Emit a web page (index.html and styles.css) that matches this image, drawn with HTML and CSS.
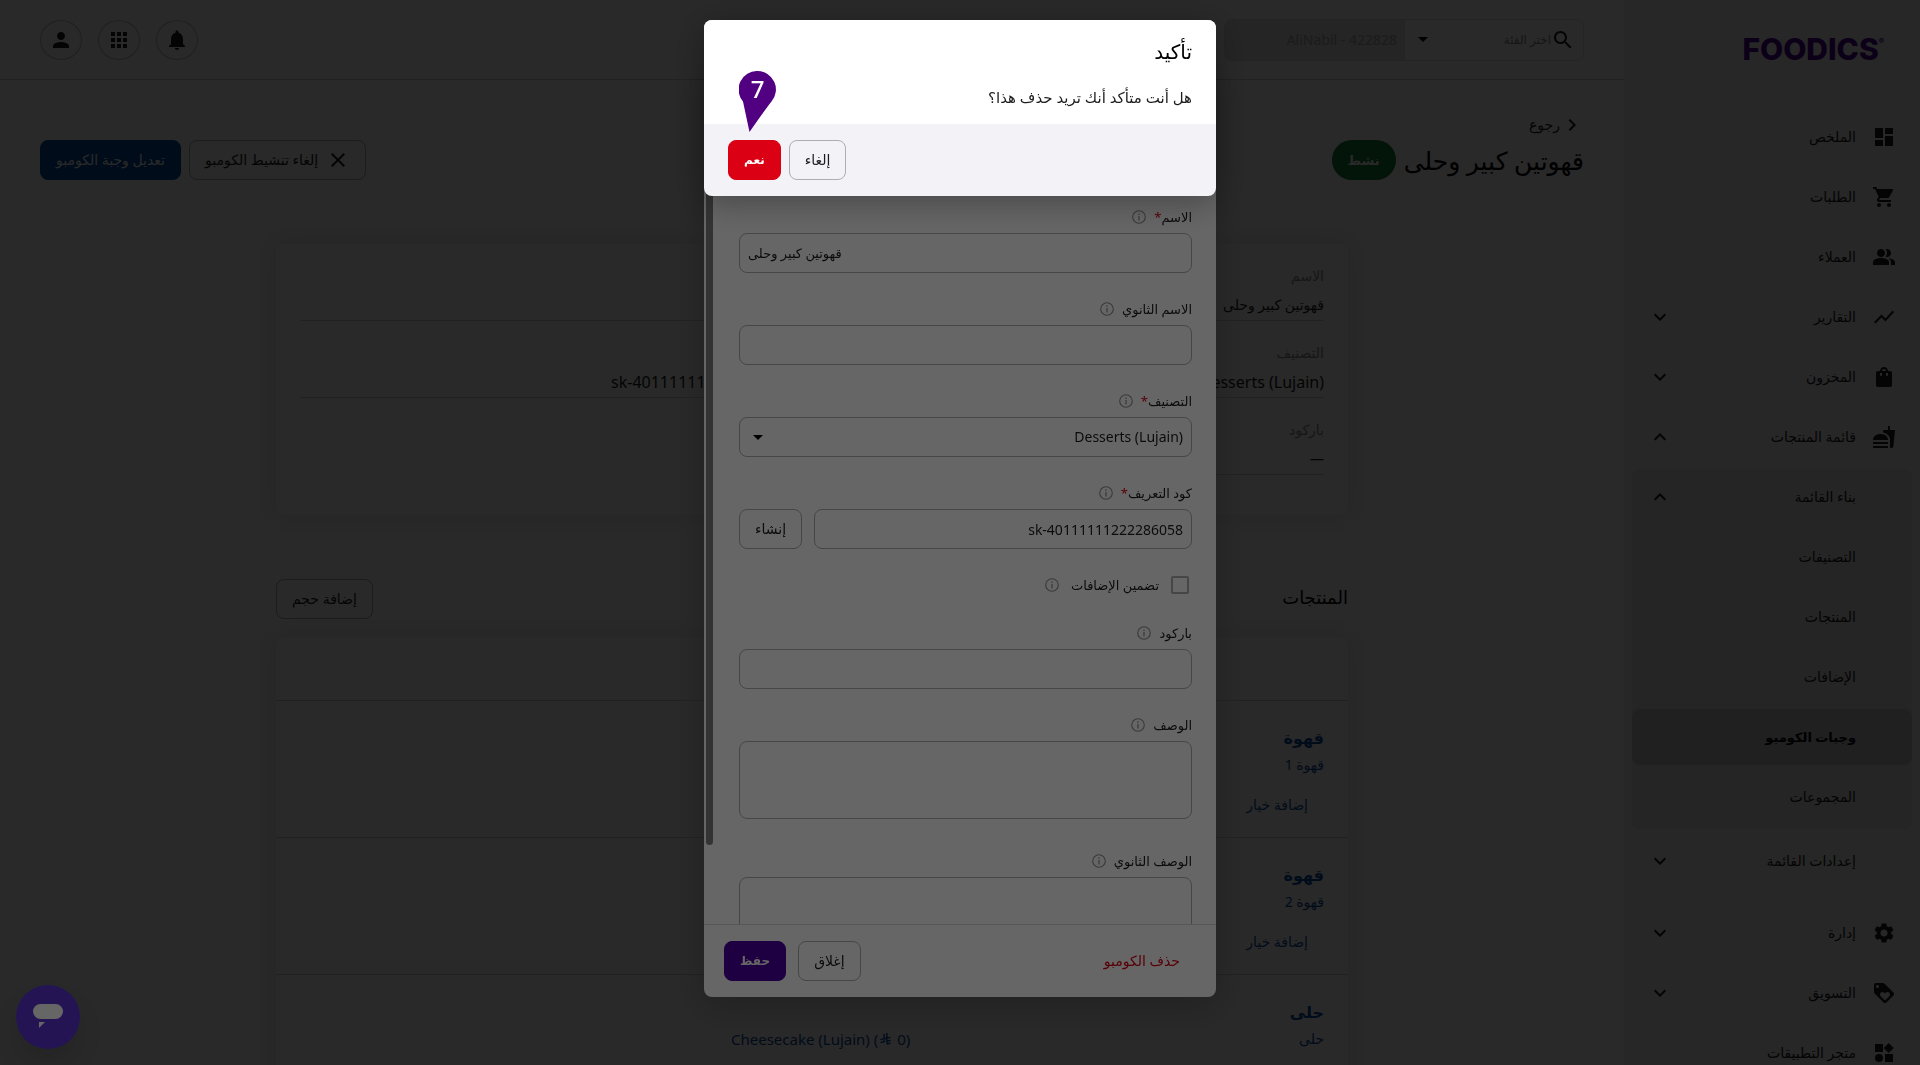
FILE: index.html
```
<!DOCTYPE html>
<html lang="ar" dir="rtl">

<head>
    <meta charset="utf-8">
    <meta name="viewport" content="width=device-width, initial-scale=1.0">
    <title>Foodics</title>
    <link rel="stylesheet" href="styles.css">
</head>

<body>

    <svg class="sprite" aria-hidden="true">
        <symbol id="down" viewBox="0 0 24 24"><path d="M7.4 8.6 12 13.2l4.6-4.6L18 10l-6 6-6-6z" /></symbol>
        <symbol id="up" viewBox="0 0 24 24"><path d="M7.4 15.4 12 10.8l4.6 4.6L18 14l-6-6-6 6z" /></symbol>
        <symbol id="info" viewBox="0 0 14 14">
            <circle cx="7" cy="7" r="6.3" fill="none" stroke="currentColor" stroke-width="1.1" />
            <path d="M6.4 6h1.2v4.4H6.4zM6.4 3.6h1.2v1.3H6.4z" />
        </symbol>
    </svg>

    <div class="app">
        <aside class="sidebar">
            <a href="#" class="logo" dir="ltr">FOODICS<sup>®</sup></a>
            <ul class="menu">
                <li><a href="#"><svg viewBox="0 0 24 24"><path d="M3 13h8V3H3v10zm0 8h8v-6H3v6zm10 0h8V11h-8v10zm0-18v6h8V3h-8z" /></svg>الملخص</a></li>
                <li><a href="#"><svg viewBox="0 0 24 24"><path d="M7 18c-1.100 0-1.990.9-1.990 2S5.900 22 7 22s2-.9 2-2-.9-2-2-2zM1 2v2h2l3.600 7.590-1.350 2.450c-.16.28-.25.61-.25.96 0 1.100.9 2 2 2h12v-2H7.420c-.14 0-.25-.11-.25-.25l.03-.12.9-1.630h7.450c.75 0 1.410-.41 1.750-1.030l3.580-6.490c.08-.14.12-.31.12-.48 0-.55-.45-1-1-1H5.210l-.94-2H1zm16 16c-1.100 0-1.990.9-1.990 2s.89 2 1.990 2 2-.9 2-2-.9-2-2-2z" /></svg>الطلبات</a></li>
                <li><a href="#"><svg viewBox="0 0 24 24"><path d="M16.670 13.130C18.040 14.060 19 15.320 19 17v3h4v-3c0-2.180-3.570-3.470-6.330-3.870zM15 12c2.210 0 4-1.790 4-4s-1.790-4-4-4c-.47 0-.91.1-1.330.24C14.500 5.270 15 6.580 15 8s-.5 2.730-1.330 3.760c.42.14.86.24 1.330.24zM9 12c2.210 0 4-1.790 4-4s-1.790-4-4-4-4 1.790-4 4 1.790 4 4 4zM9 13c-2.670 0-8 1.340-8 4v3h16v-3c0-2.660-5.330-4-8-4z" /></svg>العملاء</a></li>
                <li><a href="#"><svg viewBox="0 0 24 24"><path d="m3.500 18.490 6-6.010 4 4L22 6.920l-1.410-1.410-7.090 7.970-4-4L2 16.990z" /></svg>التقارير<svg class="arrow"><use href="#down" /></svg></a></li>
                <li><a href="#"><svg viewBox="0 0 24 24"><path d="M18 6h-2c0-2.210-1.790-4-4-4S8 3.790 8 6H6c-1.100 0-2 .9-2 2v12c0 1.100.9 2 2 2h12c1.100 0 2-.9 2-2V8c0-1.100-.9-2-2-2zm-8 4c0 .55-.45 1-1 1s-1-.45-1-1V8h2v2zm2-6c1.100 0 2 .9 2 2h-4c0-1.100.9-2 2-2zm4 6c0 .55-.45 1-1 1s-1-.45-1-1V8h2v2z" /></svg>المخزون<svg class="arrow"><use href="#down" /></svg></a></li>
                <li class="open">
                    <a href="#"><svg viewBox="0 0 24 24"><path d="M18.060 22.990h1.660c.84 0 1.530-.64 1.630-1.460L23 5.050h-5V1h-1.970v4.050h-4.970l.3 2.340c1.710.47 3.310 1.320 4.270 2.260 1.440 1.420 2.430 2.890 2.430 5.290v8.050zM1 21.990V21h15.030v.99c0 .55-.45 1-1.010 1H2.010c-.56 0-1.010-.45-1.010-1zM16.030 14.990c0-8-15.030-8-15.030 0h15.030zM1.020 17h15v2h-15z" /></svg>قائمة المنتجات<svg class="arrow"><use href="#up" /></svg></a>
                    <ul class="submenu">
                        <li><a href="#">بناء القائمة<svg class="arrow"><use href="#up" /></svg></a></li>
                        <li><a href="#">التصنيفات</a></li>
                        <li><a href="#">المنتجات</a></li>
                        <li><a href="#">الإضافات</a></li>
                        <li><a href="#" class="active">وجبات الكومبو</a></li>
                        <li><a href="#">المجموعات</a></li>
                    </ul>
                    <a href="#" class="nested">إعدادات القائمة<svg class="arrow"><use href="#down" /></svg></a>
                </li>
                <li><a href="#"><svg viewBox="0 0 24 24"><path d="M19.140 12.940c.04-.3.060-.61.060-.94 0-.32-.02-.64-.07-.94l2.030-1.580c.18-.14.23-.41.12-.61l-1.920-3.320c-.12-.22-.37-.29-.59-.22l-2.390.96c-.5-.38-1.030-.7-1.620-.94L14.400 2.810c-.04-.24-.24-.41-.48-.41h-3.840c-.24 0-.43.17-.47.41L9.250 5.350c-.59.24-1.130.57-1.620.94l-2.390-.96c-.22-.08-.47 0-.59.22L2.740 8.870c-.12.21-.08.47.12.61l2.030 1.580c-.05.3-.09.63-.09.94s.02.64.07.94l-2.030 1.580c-.18.14-.23.41-.12.61l1.920 3.320c.12.22.37.29.59.22l2.390-.96c.5.38 1.030.7 1.620.94l.36 2.540c.05.24.24.41.48.41h3.840c.24 0 .44-.17.47-.41l.36-2.540c.59-.24 1.130-.56 1.620-.94l2.390.96c.22.08.47 0 .59-.22l1.920-3.320c.12-.22.07-.47-.12-.61l-2.010-1.580zM12 15.600c-1.980 0-3.600-1.620-3.600-3.600s1.620-3.600 3.600-3.600 3.600 1.620 3.600 3.600-1.620 3.600-3.600 3.600z" /></svg>إدارة<svg class="arrow"><use href="#down" /></svg></a></li>
                <li><a href="#"><svg viewBox="0 0 24 24"><path d="m21.410 11.580-9-9C12.050 2.220 11.550 2 11 2H4c-1.100 0-2 .9-2 2v7c0 .55.22 1.050.59 1.420l9 9c.36.36.86.58 1.410.58s1.050-.22 1.410-.59l7-7c.37-.36.59-.86.59-1.410s-.23-1.060-.59-1.420zM5.500 7C4.670 7 4 6.330 4 5.500S4.670 4 5.500 4 7 4.670 7 5.500 6.330 7 5.500 7zm11.770 8.270L13 19.540l-4.270-4.270C8.280 14.810 8 14.190 8 13.500c0-1.380 1.120-2.500 2.500-2.500.69 0 1.320.28 1.770.74l.73.72.73-.73c.45-.45 1.080-.73 1.770-.73 1.380 0 2.500 1.120 2.500 2.500 0 .69-.28 1.320-.73 1.770z" /></svg>التسويق<svg class="arrow"><use href="#down" /></svg></a></li>
                <li><a href="#"><svg viewBox="0 0 24 24"><path d="M3 3h8v8H3zM13 13h8v8h-8z" /><circle cx="7" cy="17" r="4" /><path d="m16.700 2 5 5-5 5-5-5z" /></svg>متجر التطبيقات</a></li>
            </ul>
        </aside>

        <div class="page">
            <header class="topbar">
                <form class="search">
                    <svg class="icon" viewBox="0 0 24 24"><path d="M15.500 14h-.79l-.28-.27C15.410 12.590 16 11.110 16 9.500 16 5.910 13.090 3 9.500 3S3 5.910 3 9.500 5.910 16 9.500 16c1.610 0 3.090-.59 4.230-1.570l.27.28v.79l5 4.990L20.490 19l-4.990-5zm-6 0C7.010 14 5 11.990 5 9.500S7.010 5 9.500 5 14 7.010 14 9.500 11.990 14 9.500 14z" /></svg>
                    <select class="search-type" aria-label="الفئة">
                        <option>اختر الفئة</option>
                    </select>
                    <input class="search-text" type="text" aria-label="بحث" placeholder="AliNabil - 422828">
                </form>
                <nav class="tools">
                    <button aria-label="الإشعارات"><svg class="icon" viewBox="0 0 24 24"><path d="M12 22c1.100 0 2-.9 2-2h-4c0 1.100.89 2 2 2zm6-6v-5c0-3.070-1.640-5.640-4.500-6.320V4c0-.83-.67-1.500-1.500-1.500s-1.500.67-1.500 1.500v.68C7.630 5.360 6 7.920 6 11v5l-2 2v1h16v-1l-2-2z" /></svg></button>
                    <button aria-label="التطبيقات"><svg class="icon" viewBox="0 0 24 24"><path d="M4 8h4V4H4v4zm6 12h4v-4h-4v4zm-6 0h4v-4H4v4zm0-6h4v-4H4v4zm6 0h4v-4h-4v4zm6-10v4h4V4h-4zm-6 4h4V4h-4v4zm6 6h4v-4h-4v4zm0 6h4v-4h-4v4z" /></svg></button>
                    <button aria-label="الحساب"><svg class="icon" viewBox="0 0 24 24"><path d="M12 12c2.210 0 4-1.790 4-4s-1.790-4-4-4-4 1.790-4 4 1.790 4 4 4zm0 2c-2.670 0-8 1.340-8 4v2h16v-2c0-2.660-5.330-4-8-4z" /></svg></button>
                </nav>
            </header>

            <div class="heading">
                <a href="#" class="back"><svg class="icon" viewBox="0 0 24 24"><path d="m8.600 16.600 4.600-4.600-4.600-4.600L10 6l6 6-6 6z" /></svg>رجوع</a>
                <div class="heading-row">
                    <h1>قهوتين كبير وحلى</h1>
                    <span class="badge">نشط</span>
                    <div class="actions">
                        <button class="btn"><svg class="icon" viewBox="0 0 24 24"><path d="M19 6.410 17.590 5 12 10.590 6.410 5 5 6.410 10.590 12 5 17.590 6.410 19 12 13.410 17.590 19 19 17.590 13.410 12z" /></svg>إلغاء تنشيط الكومبو</button>
                        <button class="btn btn-blue">تعديل وجبة الكومبو</button>
                    </div>
                </div>
            </div>

            <main class="content">
                <dl class="card details">
                    <div><dt>الاسم</dt><dd>قهوتين كبير وحلى</dd></div>
                    <div><dt></dt><dd></dd></div>
                    <div><dt>التصنيف</dt><dd><bdi dir="ltr">Desserts (Lujain)</bdi></dd></div>
                    <div><dt></dt><dd><bdi dir="ltr">sk-40111111222286058</bdi></dd></div>
                    <div><dt>باركود</dt><dd>—</dd></div>
                </dl>

                <div class="section-head">
                    <h2>المنتجات</h2>
                    <button class="btn">إضافة حجم</button>
                </div>

                <div class="card">
                    <table class="products">
                        <thead>
                            <tr><th class="col-product"></th><th></th></tr>
                        </thead>
                        <tbody>
                            <tr>
                                <td><a href="#" class="name">قهوة</a><a href="#" class="sub">قهوة 1</a><button class="add">إضافة خيار</button></td>
                                <td></td>
                            </tr>
                            <tr>
                                <td><a href="#" class="name">قهوة</a><a href="#" class="sub">قهوة 2</a><button class="add">إضافة خيار</button></td>
                                <td></td>
                            </tr>
                            <tr>
                                <td><a href="#" class="name">حلى</a><a href="#" class="sub">حلى</a></td>
                                <td><a href="#" class="option" dir="ltr">Cheesecake (Lujain) (<svg class="riyal" viewBox="0 0 12 13"><path d="M4.500 1v8.500L.5 10.400M7.500 0v11.500M.5 7.200 11.500 4.800M7.500 9l4-1M7.500 12l4-1" fill="none" stroke="currentColor" stroke-width="1.500" /></svg> 0)</a></td>
                            </tr>
                        </tbody>
                    </table>
                </div>
            </main>
        </div>
    </div>

    <div class="overlay">
        <form class="modal">
            <div class="modal-head"></div>
            <div class="modal-body">
                <div class="field">
                    <div class="label"><label for="name">الاسم<i>*</i></label><svg><use href="#info" /></svg></div>
                    <input id="name" class="name-input" type="text" value="قهوتين كبير وحلى">
                </div>
                <div class="field">
                    <div class="label"><label for="name2">الاسم الثانوي</label><svg><use href="#info" /></svg></div>
                    <input id="name2" type="text">
                </div>
                <div class="field">
                    <div class="label"><label for="category">التصنيف<i>*</i></label><svg><use href="#info" /></svg></div>
                    <select id="category">
                        <option>&#x202A;Desserts (Lujain)&#x202C;</option>
                    </select>
                </div>
                <div class="field">
                    <div class="label"><label for="sku">كود التعريف<i>*</i></label><svg><use href="#info" /></svg></div>
                    <div class="with-button">
                        <input id="sku" type="text" value="sk-40111111222286058">
                        <button type="button" class="btn">إنشاء</button>
                    </div>
                </div>
                <div class="check">
                    <input id="modifiers" type="checkbox">
                    <label for="modifiers">تضمين الإضافات</label>
                    <svg><use href="#info" /></svg>
                </div>
                <div class="field">
                    <div class="label"><label for="barcode">باركود</label><svg><use href="#info" /></svg></div>
                    <input id="barcode" type="text">
                </div>
                <div class="field field-area">
                    <div class="label"><label for="desc">الوصف</label><svg><use href="#info" /></svg></div>
                    <textarea id="desc"></textarea>
                </div>
                <div class="field field-area">
                    <div class="label"><label for="desc2">الوصف الثانوي</label><svg><use href="#info" /></svg></div>
                    <textarea id="desc2"></textarea>
                </div>
            </div>
            <div class="scrollbar"></div>
            <div class="modal-foot">
                <button type="button" class="delete">حذف الكومبو</button>
                <button type="button" class="btn">إغلاق</button>
                <button type="button" class="btn btn-purple">حفظ</button>
            </div>
        </form>
    </div>

    <button class="chat" aria-label="محادثة"><svg viewBox="0 0 30 26"><rect width="30" height="15" rx="7.500" /><path d="M6 18h6l-6 6z" /></svg></button>

    <div class="overlay overlay-top">
        <div class="confirm" role="dialog">
            <div class="confirm-body">
                <h2>تأكيد</h2>
                <p>هل أنت متأكد أنك تريد حذف هذا؟</p>
            </div>
            <div class="confirm-foot">
                <button class="btn">إلغاء</button>
                <button class="btn btn-red">نعم</button>
            </div>
            <div class="pin">
                <svg viewBox="0 0 37 61"><path d="M18.500 0a18.500 18.500 0 0 1 14 30.500Q28 36 10.500 61L4 30.500A18.500 18.500 0 0 1 18.500 0z" /></svg>
                <span>7</span>
            </div>
        </div>
    </div>

</body>

</html>
```
FILE: styles.css
```
* {
    box-sizing: border-box;
}

body {
    margin: 0;
    height: 100vh;
    overflow: hidden;
    background: #fff;
    color: #1c1c1e;
    font-family: "Noto Sans", "DejaVu Sans", sans-serif;
    font-size: 14px;
    line-height: 24px;
}

h1,
h2,
p,
ul,
dl,
dd {
    margin: 0;
    padding: 0;
}

ul {
    list-style: none;
}

a {
    color: inherit;
    text-decoration: none;
}

button,
input,
select,
textarea {
    font: inherit;
    color: inherit;
}

button {
    cursor: pointer;
}

svg {
    fill: currentColor;
    flex: none;
}

.sprite {
    display: none;
}

.icon {
    width: 24px;
    height: 24px;
}

.btn {
    display: flex;
    align-items: center;
    justify-content: center;
    gap: 8px;
    height: 40px;
    padding: 0 15px;
    border: 1px solid #aeaeb2;
    border-radius: 8px;
    background: none;
    white-space: nowrap;
}

.btn-blue {
    background: #004ea6;
    border-color: #004ea6;
    color: #fff;
}

.btn-purple {
    background: #4b00a5;
    border-color: #4b00a5;
    color: #fff;
    font-size: 12px;
    font-weight: bold;
}

.btn-red {
    background: #dc0014;
    border-color: #dc0014;
    color: #fff;
    font-size: 12px;
    font-weight: bold;
}

.app {
    display: flex;
    height: 100%;
}

/* sidebar */

.sidebar {
    width: 296px;
    flex: none;
    padding: 0 8px;
    background: #f2f2f7;
    overflow: hidden;
}

.logo {
    display: block;
    height: 109px;
    padding: 37px 28px 0 0;
    text-align: right;
    font-family: Inter, sans-serif;
    font-size: 30px;
    font-weight: 800;
    color: #500096;
}

.logo sup {
    font-size: 8px;
    vertical-align: top;
    line-height: 8px;
}

.menu a {
    display: flex;
    align-items: center;
    gap: 16px;
    height: 56px;
    margin-bottom: 4px;
    padding: 0 16px;
    border-radius: 8px;
}

.menu svg {
    width: 24px;
    height: 24px;
}

.menu .arrow {
    margin-right: auto;
}

.submenu {
    border-radius: 8px;
    background: #e5e5ea;
    margin-bottom: 4px;
    overflow: hidden;
}

.menu .submenu a,
.menu .nested {
    padding-right: 56px;
}

.submenu .active {
    background: #c7c7cc;
    font-size: 13px;
    font-weight: bold;
    color: #000;
}

.open {
    margin-bottom: 16px;
}

/* page */

.page {
    flex: 1;
    min-width: 0;
}

.topbar {
    display: flex;
    align-items: center;
    justify-content: space-between;
    height: 80px;
    padding: 0 40px;
    border-bottom: 1px solid #d1d1d6;
}

.search {
    display: flex;
    align-items: center;
    width: 360px;
    height: 42px;
    padding-right: 8px;
    border: 1px solid #e0e0e5;
    border-radius: 8px;
    overflow: hidden;
}

.search-type {
    flex: 1;
    min-width: 0;
    height: 40px;
    padding: 0;
    border: 0;
    appearance: none;
    background: url("data:image/svg+xml,%3Csvg xmlns='http://www.w3.org/2000/svg' viewBox='0 0 10 5'%3E%3Cpath d='M0 0h10L5 5z'/%3E%3C/svg%3E") no-repeat 13px center / 10px 5px;
    color: #8e8e93;
    font-size: 12px;
}

.search-text {
    width: 180px;
    height: 40px;
    padding: 0 8px;
    border: 0;
    background: #e5e5ea;
}

.search-text::placeholder {
    color: #aeaeb2;
}

.tools {
    display: flex;
    gap: 16px;
}

.tools button {
    display: flex;
    align-items: center;
    justify-content: center;
    width: 42px;
    height: 40px;
    padding: 0;
    border: 1px solid #c7c7cc;
    border-radius: 50%;
    background: none;
}

.heading {
    padding: 30px 40px 0;
}

.back {
    display: inline-flex;
    align-items: center;
    height: 30px;
    vertical-align: top;
}

.heading-row {
    display: flex;
    align-items: center;
    gap: 8px;
}

h1 {
    font-size: 25px;
    font-weight: normal;
    line-height: 40px;
    color: #000;
}

.badge {
    padding: 0 16px;
    border-radius: 20px;
    background: #187d3a;
    color: #fff;
    font-size: 13px;
    font-weight: bold;
    line-height: 40px;
}

.actions {
    display: flex;
    gap: 8px;
    margin-right: auto;
}

.content {
    max-width: 1152px;
    margin: 0 auto;
    padding: 64px 40px 0;
}

.card {
    border-radius: 8px;
    background: #fff;
    box-shadow: 0 0 24px rgba(0, 0, 0, 0.1);
}

.details {
    display: grid;
    grid-template-columns: 1fr 1fr;
    column-gap: 48px;
    padding: 0 24px 40px;
}

.details div {
    height: 77px;
    padding-top: 20px;
    border-bottom: 1px solid #d1d1d6;
}

.details dt {
    height: 24px;
    margin-bottom: 5px;
    color: #8e8e93;
}

.details bdi {
    font-size: 16px;
}

.section-head {
    display: flex;
    align-items: flex-start;
    justify-content: space-between;
    margin: 64px 0 18px;
}

h2 {
    font-size: 18px;
    font-weight: normal;
    color: #000;
}

.section-head h2 {
    line-height: 36px;
}

.products {
    width: 100%;
    border-collapse: collapse;
    table-layout: fixed;
}

.products th {
    height: 63px;
    border-bottom: 1px solid #d1d1d6;
}

.products .col-product {
    width: 38.6%;
}

.products td {
    height: 137px;
    padding: 24px 24px 11px;
    border-bottom: 1px solid #d1d1d6;
    vertical-align: top;
    color: #0a4ea8;
}

.name,
.sub {
    display: block;
    line-height: 28px;
}

.name {
    font-size: 16px;
    font-weight: bold;
    line-height: 26px;
}

.add {
    height: 40px;
    margin-top: 6px;
    padding: 0 16px;
    border: 0;
    background: none;
}

.option {
    display: inline-block;
    margin-top: 28px;
    font-size: 15px;
}

.riyal {
    width: 11px;
    height: 12px;
    margin: 0 2px;
}

/* edit dialog */

.overlay {
    position: fixed;
    inset: 0;
    display: flex;
    align-items: center;
    justify-content: center;
    background: rgba(0, 0, 0, 0.6);
}

.overlay-top {
    align-items: flex-start;
    padding-top: 20px;
}

.modal {
    position: relative;
    display: flex;
    flex-direction: column;
    width: 512px;
    height: calc(100vh - 136px);
    border-radius: 8px;
    background: #fff;
    box-shadow: 0 8px 32px rgba(0, 0, 0, 0.2);
    overflow: hidden;
}

.modal-head {
    height: 109px;
    flex: none;
}

.modal-body {
    flex: 1;
    min-height: 0;
    padding: 24px 24px 0 35px;
    overflow: hidden;
}

.scrollbar {
    position: absolute;
    left: 2px;
    top: 80px;
    bottom: 152px;
    width: 7px;
    border-radius: 4px;
    background: #808080;
}

.field {
    margin-bottom: 20px;
}

.field-area {
    margin-bottom: 26px;
}

.label,
.check {
    display: flex;
    align-items: center;
    gap: 8px;
    height: 32px;
    font-size: 13px;
}

.label svg,
.check svg {
    width: 14px;
    height: 14px;
    color: #8e8e93;
}

.label i {
    color: #dc0014;
    font-style: normal;
}

.field input,
.field select,
.field textarea {
    display: block;
    width: 100%;
    height: 40px;
    padding: 0 8px;
    border: 1px solid #aeaeb2;
    border-radius: 8px;
    background: #fff;
}

.field .name-input {
    font-size: 13px;
    text-align: left;
}

.field textarea {
    height: 78px;
    resize: none;
}

.field select {
    appearance: none;
    background: url("data:image/svg+xml,%3Csvg xmlns='http://www.w3.org/2000/svg' viewBox='0 0 10 5'%3E%3Cpath d='M0 0h10L5 5z'/%3E%3C/svg%3E") no-repeat 13px center / 10px 5px;
}

.with-button {
    display: flex;
    gap: 12px;
}

.check {
    gap: 12px;
    margin-bottom: 16px;
    padding-right: 3px;
}

.check input {
    width: 18px;
    height: 18px;
    margin: 0;
    border: 2px solid #aeaeb2;
    border-radius: 2px;
    appearance: none;
}

.modal-foot {
    display: flex;
    gap: 12px;
    flex: none;
    padding: 16px 20px;
    border-top: 1px solid #d8d8e4;
}

.delete {
    margin-left: auto;
    padding: 0 16px;
    border: 0;
    background: none;
    color: #dc0014;
}

.chat {
    position: fixed;
    left: 16px;
    bottom: 16px;
    display: flex;
    align-items: center;
    justify-content: center;
    width: 64px;
    height: 64px;
    padding: 0;
    border: 0;
    border-radius: 50%;
    background: #5c32d2;
    box-shadow: 0 16px 24px rgba(0, 0, 0, 0.1);
    color: #fff;
}

.chat svg {
    width: 30px;
    height: 26px;
}

/* confirm dialog */

.confirm {
    position: relative;
    width: 512px;
    border-radius: 8px;
    background: #f2f2f7;
    box-shadow: 0 8px 32px rgba(0, 0, 0, 0.3);
}

.confirm-body {
    padding: 20px 24px 15px;
    border-radius: 8px 8px 0 0;
    background: #fff;
}

.confirm-body h2 {
    font-size: 20px;
}

.confirm-body p {
    margin-top: 21px;
    font-size: 15px;
}

.confirm-foot {
    display: flex;
    justify-content: flex-end;
    gap: 8px;
    padding: 16px 24px;
}

.pin {
    position: absolute;
    left: 35px;
    top: 51px;
    width: 37px;
    height: 61px;
    color: #500080;
}

.pin svg {
    display: block;
}

.pin span {
    position: absolute;
    top: 6px;
    left: 0;
    right: 0;
    text-align: center;
    color: #fff;
    font-size: 24px;
    font-weight: 500;
}
```
